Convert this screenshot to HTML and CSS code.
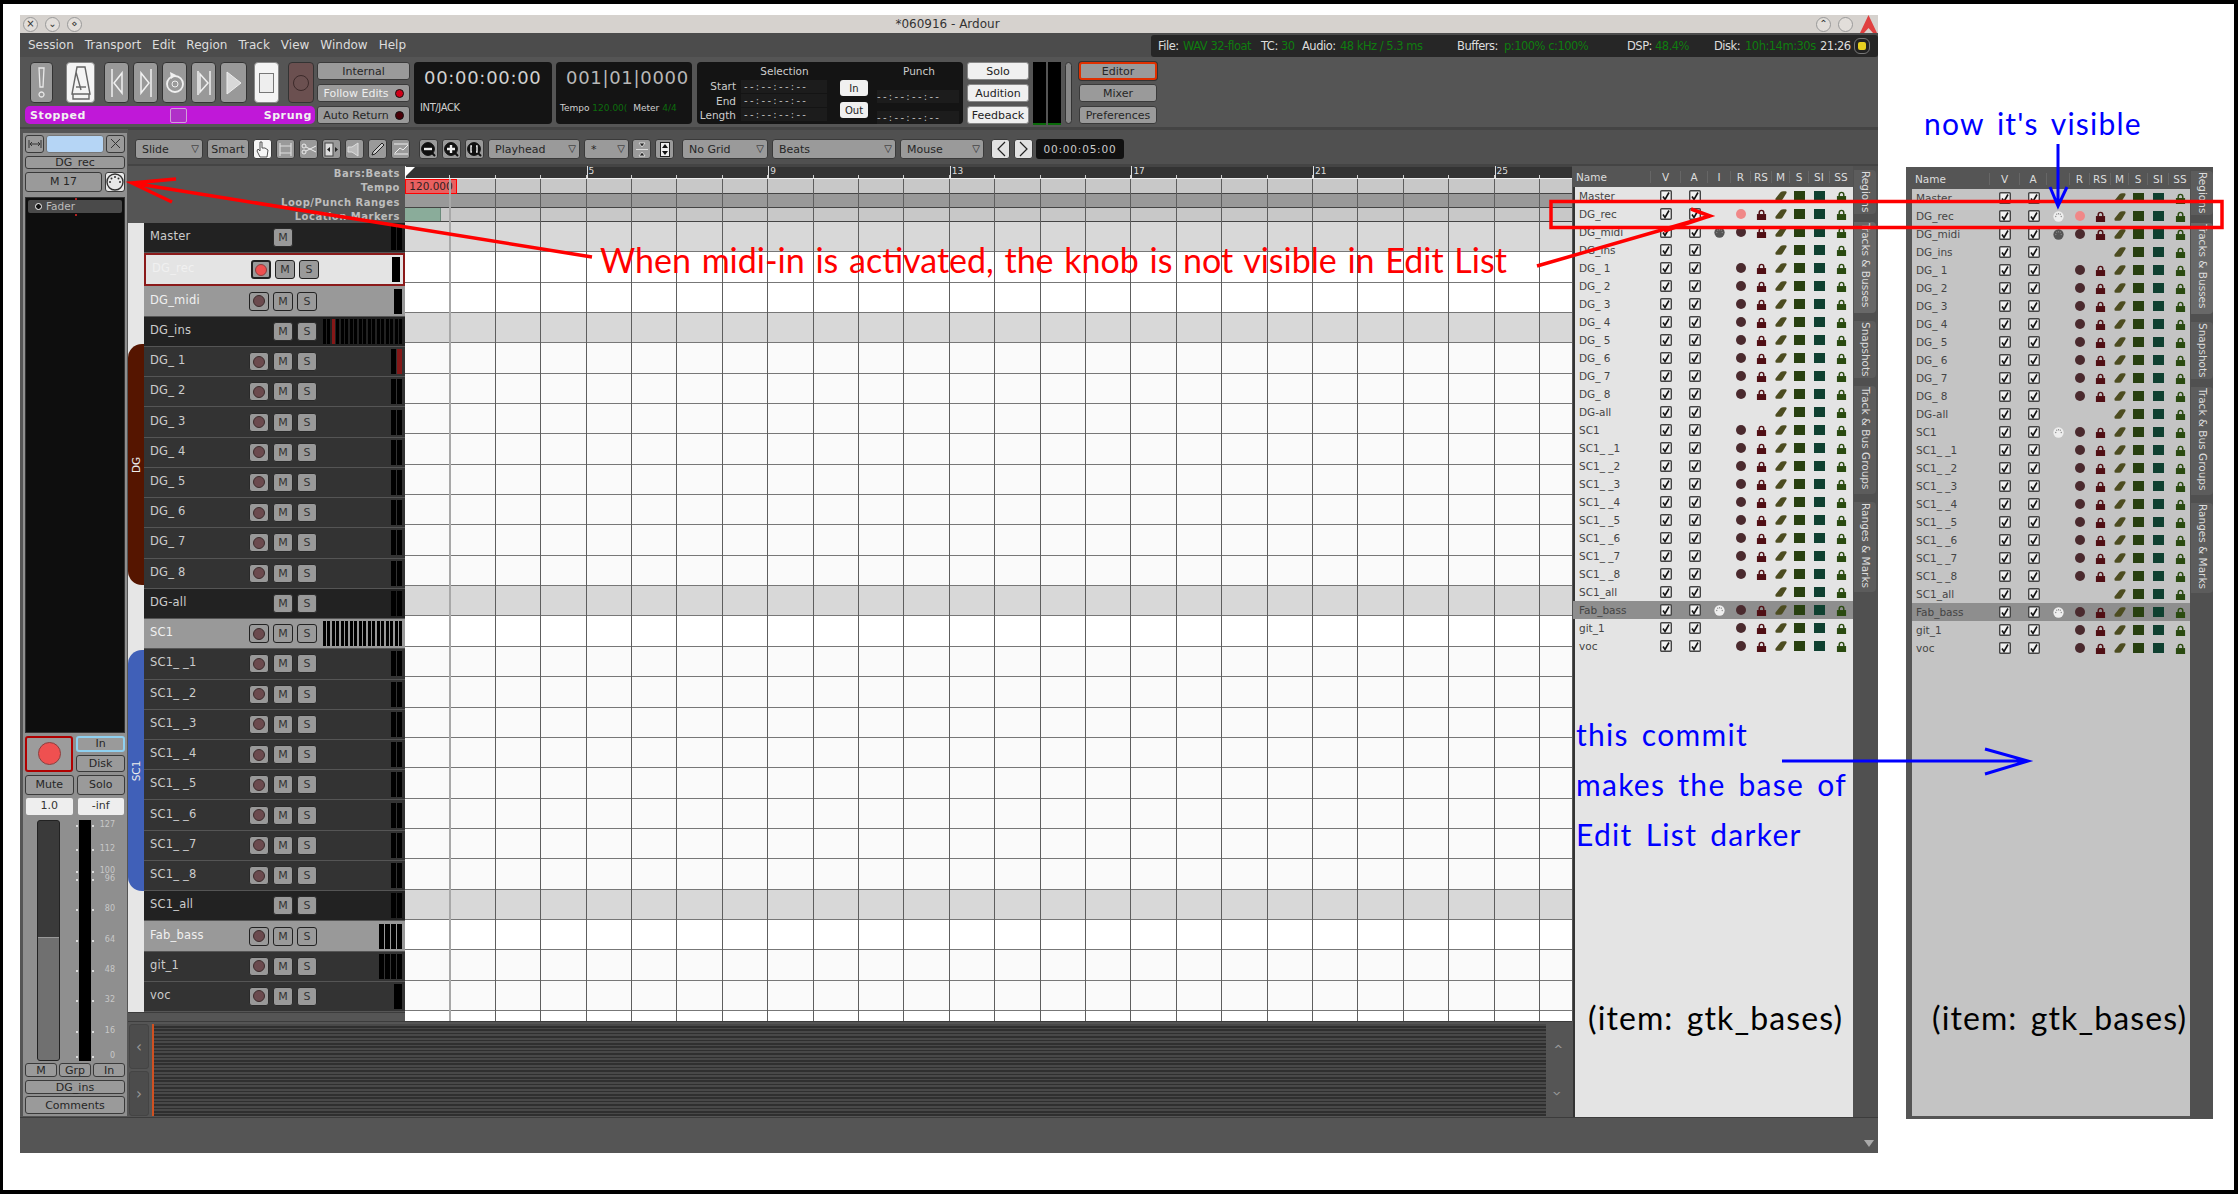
FILE: index.html
```html
<!DOCTYPE html>
<html lang="en">
<head>
    <meta charset="UTF-8">
    <title>*060916 - Ardour</title>
    <link rel="stylesheet" href="styles.css">
</head>
<body>
    <svg class="defs" width="0" height="0">
        <symbol id="check" viewBox="0 0 12 12">
            <rect x="0.7" y="0.7" width="10.6" height="10.6" rx="1" fill="#f2f2f2" stroke="#444" stroke-width="1.4"/>
            <path d="M3 6.5 L5 9.5 L9 2.5" fill="none" stroke="#111" stroke-width="1.6"/>
        </symbol>
        <symbol id="lock" viewBox="0 0 12 12">
            <path d="M3.5 6 V4 a2.5 2.5 0 0 1 5 0 V6" fill="none" stroke="currentColor" stroke-width="1.6"/>
            <rect x="1" y="5.5" width="10" height="6.5" fill="currentColor"/>
        </symbol>
        <symbol id="leaf" viewBox="0 0 12 10">
            <path d="M0.5 7.5 L5.5 1.2 Q6.5 0.2 8.5 0.2 H10.5 Q12 0.2 11.5 2 L7.5 8.5 Q6.8 9.8 5 9.8 H1.5 Q0 9.8 0.5 7.5 Z" fill="#4c4c20"/>
        </symbol>
        <symbol id="midi" viewBox="0 0 12 12">
            <circle cx="6" cy="6" r="5.6" fill="currentColor"/>
            <g fill="#888"><circle cx="3" cy="6" r=".7"/><circle cx="9" cy="6" r=".7"/><circle cx="4" cy="3.5" r=".7"/><circle cx="8" cy="3.5" r=".7"/><circle cx="6" cy="3" r=".7"/></g>
        </symbol>
    </svg>

    <div class="frame">
        <div class="window">
            <div class="titlebar">
                <div class="wm-left"><span class="wm">&#215;</span><span class="wm">&#8964;</span><span class="wm">&#8900;</span></div>
                <div class="title">*060916 - Ardour</div>
                <div class="wm-right">
                    <span class="wm">&#8963;</span><span class="wm"></span>
                    <svg class="a-logo" width="17" height="18" viewBox="0 0 17 18"><path d="M8.5 0 L17 18 H13 L8.5 13 L4 18 H0 Z" fill="#e04040"/></svg>
                </div>
            </div>

            <div class="menubar">
                <div class="menu">
                    <span>Session</span><span>Transport</span><span>Edit</span><span>Region</span><span>Track</span><span>View</span><span>Window</span><span>Help</span>
                </div>
                <div class="status">
                    <span class="w25">File:</span><span class="ok w78">WAV 32-float</span>
                    <span class="w20">TC:</span><span class="ok w21">30</span>
                    <span class="w38">Audio:</span><span class="ok w117">48 kHz / 5.3 ms</span>
                    <span class="w47">Buffers:</span><span class="ok w123">p:100% c:100%</span>
                    <span class="w28">DSP:</span><span class="ok w59">48.4%</span>
                    <span class="w31">Disk:</span><span class="ok w75">10h:14m:30s</span>
                    <span class="w35">21:26</span>
                    <span class="sync"></span>
                </div>
            </div>

            <div class="transport">
                <div class="tgroup">
                    <div class="tbuttons">
                        <button class="tb panic"><svg width="9" height="32" viewBox="0 0 9 32"><path d="M2 1 H7 L6 20 H3 Z M4.5 25 a2.5 2.5 0 1 0 .01 0" fill="none" stroke="#e8e8e8" stroke-width="1.3"/></svg></button>
                        <button class="tb metro on"><svg width="22" height="34" viewBox="0 0 22 34"><path d="M7 1 H15 L20 28 H2 Z M3 28 V33 H19 V28 M11 24 L6 6" fill="none" stroke="#666" stroke-width="1.4"/><path d="M6 21 H16" stroke="#666" stroke-width="1.4"/></svg></button>
                        <button class="tb seek"><svg width="14" height="30" viewBox="0 0 14 30"><path d="M2 1 V29 M12 5 V25 L4 15 Z" fill="none" stroke="#f0f0f0" stroke-width="1.5"/></svg></button>
                        <button class="tb seek"><svg width="14" height="30" viewBox="0 0 14 30"><path d="M12 1 V29 M2 5 V25 L10 15 Z" fill="none" stroke="#f0f0f0" stroke-width="1.5"/></svg></button>
                        <button class="tb seek"><svg width="20" height="24" viewBox="0 0 20 24"><circle cx="10" cy="13" r="8" fill="none" stroke="#f0f0f0" stroke-width="1.8"/><path d="M5 1 L11 4 L6 8 Z" fill="#f0f0f0"/><circle cx="10" cy="13" r="3" fill="none" stroke="#f0f0f0"/></svg></button>
                        <button class="tb seek"><svg width="16" height="30" viewBox="0 0 16 30"><path d="M2 3 V27 M14 3 V27 M4 6 V24 L12 15 Z" fill="none" stroke="#f0f0f0" stroke-width="1.5"/></svg></button>
                        <button class="tb play"><svg width="16" height="24" viewBox="0 0 16 24"><path d="M1 1 L15 12 L1 23 Z" fill="#d8d8d8" stroke="#eee"/></svg></button>
                        <button class="tb stop on"><span class="stop-box"></span></button>
                        <button class="tb rec"><span class="rec-ring"></span></button>
                    </div>
                    <div class="purple"><b>Stopped</b><span class="purple-box"></span><b>Sprung</b></div>
                </div>

                <div class="col col-mon">
                    <button class="btn wide">Internal</button>
                    <button class="btn wide lit">Follow Edits<i class="led red"></i></button>
                    <button class="btn wide">Auto Return<i class="led dim"></i></button>
                </div>

                <div class="clock clock-a">
                    <div class="digits">00:00:00:00</div>
                    <div class="sub">INT/JACK</div>
                </div>
                <div class="clock clock-b">
                    <div class="digits bbt">001|01|0000</div>
                    <div class="sub tempo">Tempo <em>120.00(</em> <span>Meter</span> <em>4/4</em></div>
                </div>

                <div class="selpanel">
                    <div class="selcol">
                        <div class="selhead">Selection</div>
                        <div class="selrow"><label>Start</label><span class="dash">--:--:--:--</span></div>
                        <div class="selrow"><label>End</label><span class="dash">--:--:--:--</span></div>
                        <div class="selrow"><label>Length</label><span class="dash">--:--:--:--</span></div>
                    </div>
                    <div class="inout">
                        <button class="lightbtn">In</button>
                        <button class="lightbtn">Out</button>
                    </div>
                    <div class="punch">
                        <div class="selhead">Punch</div>
                        <span class="dash">--:--:--:--</span>
                        <span class="dash">--:--:--:--</span>
                    </div>
                </div>

                <div class="col col-solo">
                    <button class="btn wide lightface">Solo</button>
                    <button class="btn wide lightface">Audition</button>
                    <button class="btn wide lightface">Feedback</button>
                </div>
                <div class="master-meter"><span></span><span></span></div>
                <div class="handle"></div>
                <div class="col col-tabs">
                    <button class="btn wide active">Editor</button>
                    <button class="btn wide">Mixer</button>
                    <button class="btn wide">Preferences</button>
                </div>
            </div>

            <div class="workspace">
                <div class="stripcol">
                    <div class="strip">
                        <div class="s-top">
                            <button class="btn sq"><svg width="14" height="8" viewBox="0 0 14 8"><path d="M1 0 V8 M13 0 V8 M2 4 H12 M4 2 L2 4 L4 6 M10 2 L12 4 L10 6" fill="none" stroke="#333"/></svg></button>
                            <div class="s-name"></div>
                            <button class="btn sq"><svg width="11" height="11" viewBox="0 0 11 11"><path d="M1 1 L10 10 M10 1 L1 10" stroke="#333"/></svg></button>
                        </div>
                        <button class="btn s-label">DG_rec</button>
                        <div class="s-midi">
                            <button class="btn s-m17">M 17</button>
                            <button class="btn s-din">
                                <svg width="18" height="18" viewBox="0 0 18 18"><circle cx="9" cy="9" r="8" fill="none" stroke="#333" stroke-width="1.4"/><g fill="#333"><circle cx="4" cy="9" r="1"/><circle cx="14" cy="9" r="1"/><circle cx="5.5" cy="5.5" r="1"/><circle cx="12.5" cy="5.5" r="1"/><circle cx="9" cy="4" r="1"/></g></svg>
                            </button>
                        </div>
                        <div class="processors">
                            <div class="fader-proc"><i></i>Fader</div>
                        </div>
                        <div class="s-rec">
                            <button class="btn s-recbtn"><span></span></button>
                            <div class="s-inputs">
                                <button class="btn s-in">In</button>
                                <button class="btn s-disk">Disk</button>
                            </div>
                        </div>
                        <div class="s-ms">
                            <button class="btn">Mute</button>
                            <button class="btn">Solo</button>
                        </div>
                        <div class="s-gain">
                            <span>1.0</span>
                            <span>-inf</span>
                        </div>
                        <div class="s-fader">
                            <div class="fader"><div class="fader-fill"></div></div>
                            <div class="smeter" id="meter-scale"></div>
                        </div>
                        <div class="s-bottom">
                            <button class="btn">M</button>
                            <button class="btn">Grp</button>
                            <button class="btn">In</button>
                        </div>
                        <button class="btn s-bus">DG_ins</button>
                        <button class="btn s-comments">Comments</button>
                    </div>
                </div>

                <div class="rightside">
                    <div class="toolbar">
                        <button class="btn dd w68">Slide</button>
                        <button class="btn w42">Smart</button>
                        <button class="btn tool on"><svg width="13" height="17" viewBox="0 0 13 17"><path d="M4 1 V10 L2 8 L1 10 L4 16 H11 L12 9 L9 7 L6 7 V1 Z" fill="none" stroke="#555"/></svg></button>
                        <button class="btn tool"><svg width="15" height="15" viewBox="0 0 15 15"><path d="M2 1 V14 M13 1 V14 M2 4 H13 M2 11 H13" fill="none" stroke="#ddd" stroke-width="1.2"/></svg></button>
                        <button class="btn tool"><svg width="16" height="12" viewBox="0 0 16 12"><circle cx="3" cy="3" r="2" fill="none" stroke="#eee"/><circle cx="3" cy="9" r="2" fill="none" stroke="#eee"/><path d="M5 4 L15 9 M5 8 L15 3" stroke="#eee"/></svg></button>
                        <button class="btn tool"><svg width="15" height="15" viewBox="0 0 15 15"><rect x="1" y="1" width="8" height="13" fill="#ddd" stroke="#444"/><path d="M3 7.5 L6 5 V10 Z M11 5 L14 7.5 L11 10 Z" fill="#222"/></svg></button>
                        <button class="btn tool"><svg width="15" height="15" viewBox="0 0 15 15"><path d="M1 5 H5 L11 1 V14 L5 10 H1 Z" fill="#bbb" stroke="#ddd"/></svg></button>
                        <button class="btn tool"><svg width="14" height="14" viewBox="0 0 14 14"><path d="M1 13 L2 10 L11 1 L13 3 L4 12 Z" fill="#ccc" stroke="#222"/></svg></button>
                        <button class="btn tool"><svg width="16" height="14" viewBox="0 0 16 14"><path d="M1 2 H15 M1 12 H15 M2 11 L7 6 L10 8 L15 3" fill="none" stroke="#eee"/></svg></button>
                        <button class="btn zoom gap9"><svg width="15" height="15" viewBox="0 0 15 15"><circle cx="7" cy="7" r="6.4" fill="#111" stroke="#111"/><path d="M3 7 H11" stroke="#eee" stroke-width="2.4"/><path d="M11 11 L14 14" stroke="#111" stroke-width="2"/></svg></button>
                        <button class="btn zoom"><svg width="15" height="15" viewBox="0 0 15 15"><circle cx="7" cy="7" r="6.4" fill="#111" stroke="#111"/><path d="M3 7 H11 M7 3 V11" stroke="#eee" stroke-width="2.4"/><path d="M11 11 L14 14" stroke="#111" stroke-width="2"/></svg></button>
                        <button class="btn zoom"><svg width="15" height="15" viewBox="0 0 15 15"><circle cx="7" cy="7" r="6.4" fill="#111" stroke="#111"/><path d="M5 4 H4 V10 H5 M9 4 H10 V10 H9" fill="none" stroke="#eee" stroke-width="1.4"/><path d="M11 11 L14 14" stroke="#111" stroke-width="2"/></svg></button>
                        <button class="btn dd w92">Playhead</button>
                        <button class="btn dd w45">*</button>
                        <button class="btn tool tight"><svg width="14" height="15" viewBox="0 0 14 15"><path d="M1 7.5 H13 M4 1 H10 L7 5 Z M4 14 H10 L7 10 Z" fill="#222" stroke="#eee" stroke-width=".8"/></svg></button>
                        <button class="btn tool lightt"><svg width="10" height="15" viewBox="0 0 10 15"><rect x=".5" y=".5" width="9" height="14" fill="#eee" stroke="#222"/><path d="M2 6 L5 2 L8 6 Z M2 9 L5 13 L8 9 Z" fill="#111"/></svg></button>
                        <button class="btn dd w86 gap8">No Grid</button>
                        <button class="btn dd w124">Beats</button>
                        <button class="btn dd w84">Mouse</button>
                        <button class="btn nudge gap7"><svg width="10" height="16" viewBox="0 0 10 16"><path d="M9 1 L2 8 L9 15" fill="none" stroke="#222" stroke-width="1.2"/></svg></button>
                        <button class="btn nudge"><svg width="10" height="16" viewBox="0 0 10 16"><path d="M1 1 L8 8 L1 15" fill="none" stroke="#222" stroke-width="1.2"/></svg></button>
                        <div class="nudge-clock">00:00:05:00</div>
                    </div>

                    <div class="editarea">
                        <div class="editor">
                            <div class="timeline">
                                <div class="leftcol">
                                    <div class="rulerlabels">
                                        <div>Bars:Beats</div>
                                        <div>Tempo</div>
                                        <div>Loop/Punch Ranges</div>
                                        <div>Location Markers</div>
                                    </div>
                                    <div class="tracks" id="tracks"></div>
                                    <div class="trackfoot"></div>
                                </div>
                                <div class="canvas">
                                    <div class="bars">
                                        <div class="bar"></div><div class="bar">5</div><div class="bar">9</div><div class="bar">13</div><div class="bar">17</div><div class="bar">21</div><div class="bar">25</div>
                                    </div>
                                    <div class="band tempo-band"><span class="tempo-mark">120.000</span></div>
                                    <div class="band range-band"></div>
                                    <div class="band marker-band"><span class="marker-mark"></span></div>
                                    <div class="lanes" id="lanes"></div>
                                    <div class="lanefoot"></div>
                                    <div class="gridlines"></div>
                                </div>
                            </div>
                            <div class="summary">
                                <div class="sumbtns"><button>&#8249;</button><button>&#8250;</button></div>
                                <div class="sumview"></div>
                                <div class="sumbtns"><button class="up">&#8250;</button><button class="down">&#8250;</button></div>
                            </div>
                        </div>
                        <div class="editlist-wrap" data-list="before"></div>
                    </div>
                </div>
            </div>

            <div class="statusbar"><span class="grip"></span></div>
        </div>

        <div class="crop editlist-wrap" data-list="after"></div>

        <!-- annotations drawn over the screenshot -->
        <svg class="marks" width="2238" height="1194" viewBox="0 0 2238 1194">
            <g fill="none" stroke="#f00" stroke-width="3.5">
                <rect x="1551" y="201.5" width="671" height="26" stroke-width="3.5"/>
                <path d="M592 257 L132 183 M176 179 L132 183 L172 202"/>
                <path d="M1537 266 L1710 216 M1691 209 L1710 216 L1664 231"/>
            </g>
            <g fill="none" stroke="#00f" stroke-width="3">
                <path d="M2058 144 V206 M2050 187 L2058 206 L2067 187"/>
                <path d="M1782 761 H2028 M1985 749 L2028 761 L1985 774"/>
            </g>
        </svg>
        <div class="note note-red">When midi-in is activated, the knob is not visible in Edit List</div>
        <div class="note note-now">now it's visible</div>
        <div class="note note-commit">this commit<br>makes the base of<br>Edit List darker</div>
        <div class="note note-item one">(item: gtk_bases)</div>
        <div class="note note-item two">(item: gtk_bases)</div>
    </div>

    <script>
        // kind: row colour, bars: meter bars, input / afterInput: midi dot in the two lists
        const tracks = [
            { name: 'Master', kind: 'bus', rec: false, solo: false, bars: 2 },
            { name: 'DG_rec', kind: 'selected', bars: 1, single: true, afterInput: 'in-white', armed: true },
            { name: 'DG_midi', kind: 'grey', bars: 1, single: true, input: 'in-dark', afterInput: 'in-dark' },
            { name: 'DG_ins', kind: 'bus', rec: false, bars: 18, hot: 2 },
            { name: 'DG_ 1', bars: 2, hot: 1 },
            { name: 'DG_ 2', bars: 2 },
            { name: 'DG_ 3', bars: 2 },
            { name: 'DG_ 4', bars: 2 },
            { name: 'DG_ 5', bars: 2 },
            { name: 'DG_ 6', bars: 2 },
            { name: 'DG_ 7', bars: 2 },
            { name: 'DG_ 8', bars: 2 },
            { name: 'DG-all', kind: 'bus', rec: false, bars: 2 },
            { name: 'SC1', kind: 'grey', bars: 18, afterInput: 'in-white' },
            { name: 'SC1_ _1', bars: 2 },
            { name: 'SC1_ _2', bars: 2 },
            { name: 'SC1_ _3', bars: 2 },
            { name: 'SC1_ _4', bars: 2 },
            { name: 'SC1_ _5', bars: 2 },
            { name: 'SC1_ _6', bars: 2 },
            { name: 'SC1_ _7', bars: 2 },
            { name: 'SC1_ _8', bars: 2 },
            { name: 'SC1_all', kind: 'bus', rec: false, bars: 2 },
            { name: 'Fab_bass', kind: 'grey', bars: 4, input: 'in-white', afterInput: 'in-white', hl: true },
            { name: 'git_1', bars: 4 },
            { name: 'voc', bars: 1, single: true }
        ];

        const trackList = document.getElementById('tracks');
        const lanes = document.getElementById('lanes');

        function addGroupTab(label, cls) {
            const tab = document.createElement('div');
            tab.className = 'grouptab ' + cls;
            tab.innerHTML = `<span>${label}</span>`;
            trackList.appendChild(tab);
        }

        tracks.forEach(t => {
            const row = document.createElement('div');
            row.className = 'track ' + (t.kind || '');
            const hasRec = t.rec !== false;
            let meter = '';
            for (let i = 0; i < t.bars; i++) {
                meter += `<i class="${t.hot === i ? 'hot' : ''}"></i>`;
            }
            row.innerHTML = `
                <div class="tname">${t.name}</div>
                ${hasRec ? `<button class="tbtn trec ${t.armed ? 'armed' : ''}"><span></span></button>` : '<span class="tspace"></span>'}
                <button class="tbtn">M</button>
                ${t.solo !== false ? '<button class="tbtn">S</button>' : ''}
                <div class="tmeter ${t.bars > 4 ? 'many' : ''} ${t.single ? 'onebar' : ''}">${meter}</div>
            `;
            trackList.appendChild(row);

            const lane = document.createElement('div');
            lane.className = 'lane ' + (t.kind || '');
            lanes.appendChild(lane);
        });

        addGroupTab('DG', 'dg');
        addGroupTab('SC1', 'sc');

        const columns = ['Name', 'V', 'A', 'I', 'R', 'RS', 'M', 'S', 'SI', 'SS'];
        const use = (id, cls) => `<svg class="${cls}"><use href="#${id}"/></svg>`;

        function buildList(wrap, after) {
            let html = '<div class="listcol"><div class="listhead">';
            columns.forEach(c => { html += `<div>${c}</div>`; });
            html += '</div><div class="listbody">';
            tracks.forEach(t => {
                const input = after ? t.afterInput : t.input;
                const hasRec = t.rec !== false;
                html += `<div class="lrow ${t.hl ? 'hl' : ''}">
                    <div class="lname">${t.name}</div>
                    <div>${use('check', 'ck')}</div>
                    <div>${use('check', 'ck')}</div>
                    <div>${input ? use('midi', 'ic-in ' + input) : ''}</div>
                    <div>${hasRec ? `<span class="rdot ${t.armed ? 'armed' : ''}"></span>` : ''}</div>
                    <div>${hasRec ? use('lock', 'ic rs') : ''}</div>
                    <div>${use('leaf', 'ic-leaf')}</div>
                    <div><span class="sq-s"></span></div>
                    <div><span class="sq-si"></span></div>
                    <div>${use('lock', 'ic ss')}</div>
                </div>`;
            });
            html += '</div></div><div class="vtabs">';
            ['Regions', 'Tracks &amp; Busses', 'Snapshots', 'Track &amp; Bus Groups', 'Ranges &amp; Marks'].forEach((v, i) => {
                html += `<div class="vtab v${i}">${v}</div>`;
            });
            html += '</div>';
            wrap.innerHTML = html;
        }

        document.querySelectorAll('.editlist-wrap').forEach(w => buildList(w, w.dataset.list === 'after'));

        // mixer strip meter scale
        const scale = document.getElementById('meter-scale');
        [['127', 826], ['112', 850], ['100', 872], ['96', 880], ['80', 910], ['64', 941], ['48', 971], ['32', 1001], ['16', 1032], ['0', 1057]].forEach(s => {
            const top = s[1] - 821;
            const label = document.createElement('span');
            label.className = 'scale';
            label.style.top = (top - 5) + 'px';
            label.textContent = s[0];
            scale.appendChild(label);
            const tick = document.createElement('span');
            tick.className = 'tick';
            tick.style.top = top + 'px';
            scale.appendChild(tick);
        });
    </script>
</body>
</html>
```
FILE: styles.css
```css
* {
    box-sizing: border-box;
}
html, body {
    margin: 0;
    padding: 0;
    background: #fff;
}
.defs {
    position: absolute;
}
button {
    font: inherit;
    padding: 0;
    margin: 0;
}
.frame {
    position: relative;
    width: 2238px;
    height: 1194px;
    overflow: hidden;
    border: solid #000;
    border-width: 4px 4px 4px 3px;
    padding: 11px 0 0 17px;
    display: flex;
    align-items: flex-start;
    background: #fff;
    font-family: "DejaVu Sans", sans-serif;
}
.window {
    width: 1858px;
    height: 1138px;
    flex: none;
    display: flex;
    flex-direction: column;
    background: #555;
}

/* title bar */
.titlebar {
    height: 18px;
    background: #d6d2ce;
    display: flex;
    align-items: center;
    position: relative;
    flex: none;
}
.title {
    flex: 1;
    text-align: center;
    font-size: 12px;
    color: #333;
    padding-right: 3px;
}
.wm-left, .wm-right {
    display: flex;
    gap: 7px;
    align-items: center;
}
.wm-left {
    padding-left: 3px;
    width: 300px;
}
.wm-right {
    width: 300px;
    justify-content: flex-end;
    padding-right: 1px;
    gap: 7px;
}
.wm {
    width: 15px;
    height: 15px;
    border-radius: 50%;
    background: #e2deda;
    border: 1px solid #999;
    font-size: 10px;
    line-height: 12px;
    text-align: center;
    color: #333;
}

/* menu + session info */
.menubar {
    height: 24px;
    flex: none;
    display: flex;
    align-items: stretch;
    background: #4c4c4c;
}
.menu {
    display: flex;
    width: 1131px;
    padding-left: 8px;
    gap: 11px;
    align-items: center;
    font-size: 12px;
    color: #ddd;
}
.status {
    width: 727px;
    margin-top: 2px;
    background: #262626;
    border-radius: 3px;
    display: flex;
    align-items: center;
    padding-left: 7px;
    font-size: 11.5px;
    letter-spacing: -.5px;
    color: #ddd;
    white-space: nowrap;
}
.ok {
    color: #0f7d0f;
}
.w20 { width: 20px; }
.w21 { width: 21px; }
.w25 { width: 25px; }
.w28 { width: 28px; }
.w31 { width: 31px; }
.w35 { width: 35px; }
.w38 { width: 38px; }
.w47 { width: 47px; }
.w59 { width: 59px; }
.w75 { width: 75px; }
.w78 { width: 78px; }
.w117 { width: 117px; }
.w123 { width: 123px; }
.sync {
    width: 14px;
    height: 14px;
    background: #e8d020;
    border: 3px solid #222;
    outline: 1px solid #777;
    border-radius: 5px;
}

/* transport */
.transport {
    height: 72px;
    flex: none;
    display: flex;
    padding: 5px 0 0 5px;
    border-bottom: 2px solid #444;
}
.tgroup {
    width: 290px;
    flex: none;
}
.tbuttons {
    display: flex;
    gap: 4px;
    height: 41px;
}
.tb {
    width: 25px;
    height: 41px;
    background: #999;
    border: 1px solid #333;
    border-radius: 4px;
    display: flex;
    align-items: center;
    justify-content: center;
}
.tb.on {
    background: #f4f4f4;
    border-color: #888;
}
.panic {
    width: 23px;
    margin-left: 5px;
}
.metro {
    width: 29px;
    margin-left: 9px;
    margin-right: 5px;
}
.play {
    width: 27px;
}
.stop {
    margin-left: 3px;
}
.stop-box {
    width: 15px;
    height: 20px;
    border: 1px solid #777;
    background: #eee;
}
.rec {
    width: 26px;
    margin-left: 5px;
    background: #6b5050;
}
.rec-ring {
    width: 16px;
    height: 16px;
    border-radius: 50%;
    border: 1px solid #3c2a2a;
    background: #6b5050;
}
.purple {
    height: 18px;
    margin-top: 3px;
    background: #c018d8;
    border-radius: 5px;
    display: flex;
    align-items: center;
    justify-content: space-between;
    padding: 0 3px 0 5px;
    font-size: 11px;
    letter-spacing: .6px;
    color: #f2f2f2;
}
.purple-box {
    width: 17px;
    height: 15px;
    border: 1px solid #d0a0d8;
    background: #b030c8;
    border-radius: 2px;
    margin-left: 8px;
}
.col {
    display: flex;
    flex-direction: column;
    gap: 4px;
    flex: none;
}
.btn {
    background: #9a9a9a;
    border: 1px solid #3a3a3a;
    border-radius: 3px;
    color: #262626;
    font-size: 11px;
    display: flex;
    align-items: center;
    justify-content: center;
    white-space: nowrap;
}
.wide {
    height: 18px;
    width: 100%;
}
.col-mon {
    width: 93px;
    margin-left: 2px;
}
.lit {
    color: #eee;
}
.led {
    width: 9px;
    height: 9px;
    border-radius: 50%;
    margin-left: 6px;
    border: 1px solid #111;
}
.led.red {
    background: #d00018;
}
.led.dim {
    background: #4a0008;
}
.clock {
    background: #141414;
    border-radius: 4px;
    height: 62px;
    color: #d0d0d0;
    flex: none;
    margin-left: 4px;
}
.clock-a {
    width: 138px;
    padding: 5px 0 0 6px;
}
.clock-b {
    width: 136px;
    padding: 5px 0 0 4px;
}
.digits {
    font-size: 18px;
    line-height: 22px;
    letter-spacing: .7px;
    white-space: nowrap;
    padding-left: 4px;
}
.bbt {
    padding-left: 6px;
    color: #b8b8b8;
}
.sub {
    font-size: 10px;
    margin-top: 13px;
    letter-spacing: -.4px;
}
.tempo {
    font-size: 9px;
    margin-top: 14px;
    white-space: nowrap;
    letter-spacing: 0;
}
.tempo em {
    font-style: normal;
    color: #0d6d0d;
    margin-right: 3px;
}
.selpanel {
    width: 266px;
    height: 62px;
    margin-left: 5px;
    background: #141414;
    border-radius: 4px;
    display: flex;
    flex: none;
    color: #ccc;
    font-size: 11px;
}
.selcol {
    width: 131px;
}
.selhead {
    text-align: center;
    height: 17px;
    line-height: 18px;
    padding-left: 44px;
    font-size: 10.5px;
}
.selrow {
    display: flex;
    height: 14.4px;
    align-items: center;
}
.selrow label {
    width: 40px;
    text-align: right;
    padding-right: 1px;
    font-size: 10.5px;
}
.dash {
    letter-spacing: 2.3px;
    font-size: 10px;
    line-height: 13px;
    color: #bbb;
    margin-left: 4px;
    background: #1c1c1c;
    white-space: nowrap;
    padding: 0 0 0 3px;
    width: 86px;
}
.inout {
    width: 49px;
    padding: 18px 0 0 12px;
    display: flex;
    flex-direction: column;
    gap: 6px;
}
.lightbtn {
    width: 28px;
    height: 16px;
    background: #f0f0f0;
    border: 0;
    border-radius: 3px;
    font-size: 10px;
    color: #222;
}
.punch {
    width: 84px;
    display: flex;
    flex-direction: column;
    gap: 8px;
}
.punch .selhead {
    padding-left: 0;
    height: 20px;
}
.punch .dash {
    margin: 0;
    width: 82px;
    padding-left: 0;
}
.col-solo {
    width: 62px;
    margin-left: 4px;
}
.lightface {
    background: #f0f0f0;
    color: #222;
    border-color: #888;
}
.master-meter {
    width: 28px;
    height: 63px;
    margin-left: 4px;
    display: flex;
    gap: 2px;
    flex: none;
}
.master-meter span {
    flex: 1;
    background: linear-gradient(#000 97%, #0a6a0a 97%);
}
.handle {
    width: 7px;
    height: 62px;
    margin-left: 4px;
    background: #888;
    border: 1px solid #333;
    border-radius: 4px;
    flex: none;
}
.col-tabs {
    width: 78px;
    margin-left: 7px;
}
.active {
    border: 2px solid #e03000;
    box-shadow: 0 0 0 1px #333;
}

/* main area */
.workspace {
    flex: 1;
    display: flex;
    min-height: 0;
}
.stripcol {
    width: 108px;
    flex: none;
    padding: 4px 0 0 3px;
}
.strip {
    width: 104px;
    height: 983px;
    background: #8f8f8f;
    padding: 2px;
    display: flex;
    flex-direction: column;
}
.s-top {
    display: flex;
    gap: 2px;
    height: 18px;
}
.sq {
    width: 19px;
    flex: none;
}
.s-name {
    flex: 1;
    background: #b5d5f5;
    border-radius: 3px;
    border: 1px solid #777;
}
.s-label {
    height: 13px;
    margin-top: 3px;
}
.s-midi {
    display: flex;
    gap: 3px;
    margin-top: 3px;
    height: 20px;
}
.s-m17 {
    flex: 1;
}
.s-din {
    width: 20px;
    flex: none;
    background: #e8e8e8;
}
.processors {
    height: 536px;
    margin-top: 5px;
    background: #0e0e0e;
    border: 1px solid #333;
    padding: 2px;
    flex: none;
}
.fader-proc {
    height: 13px;
    background: #4a4a4a;
    border-radius: 2px;
    color: #bbb;
    font-size: 10.5px;
    display: flex;
    align-items: center;
    padding-left: 7px;
    gap: 4px;
    position: relative;
}
.fader-proc::before, .fader-proc::after {
    content: "";
    position: absolute;
    left: 47px;
    width: 2px;
    height: 2px;
    background: #b02020;
}
.fader-proc::before {
    top: -2px;
}
.fader-proc::after {
    bottom: -3px;
}
.fader-proc i {
    width: 7px;
    height: 7px;
    border-radius: 50%;
    background: #111;
    border: 1.5px solid #fff;
}
.s-rec {
    display: flex;
    gap: 3px;
    margin-top: 3px;
    height: 36px;
}
.s-recbtn {
    width: 48px;
    border: 2px solid #b00000;
    background: #9c9c9c;
}
.s-recbtn span {
    width: 23px;
    height: 23px;
    border-radius: 50%;
    background: #ef5050;
    border: 1px solid #8a4040;
}
.s-inputs {
    flex: 1;
    display: flex;
    flex-direction: column;
    gap: 3px;
}
.s-in {
    height: 16px;
    border: 2px solid #8fd0f0;
}
.s-disk {
    flex: 1;
}
.s-ms {
    display: flex;
    gap: 3px;
    height: 20px;
    margin-top: 3px;
}
.s-ms .btn {
    flex: 1;
}
.s-gain {
    display: flex;
    gap: 5px;
    height: 18px;
    margin-top: 3px;
    padding: 0 1px;
}
.s-gain span {
    flex: 1;
    background: #eee;
    border-radius: 2px;
    font-size: 11px;
    color: #333;
    text-align: center;
    line-height: 16px;
}
.s-fader {
    display: flex;
    height: 242px;
    margin-top: 5px;
    padding-left: 12px;
}
.fader {
    width: 23px;
    background: #3a3a3a;
    border: 1px solid #222;
    border-radius: 3px;
    position: relative;
    overflow: hidden;
    display: flex;
    align-items: flex-end;
}
.fader-fill {
    width: 100%;
    height: 123px;
    background: #707070;
    border-top: 1px solid #999;
}
.smeter {
    position: relative;
    width: 12px;
    margin-left: 19px;
    background: #000;
}
.scale {
    position: absolute;
    right: -24px;
    color: #c8c8c8;
    font-size: 8px;
    line-height: 10px;
}
.tick {
    position: absolute;
    left: -3px;
    right: -3px;
    height: 2px;
    border-left: 2px solid #ddd;
    border-right: 2px solid #ddd;
}
.s-bottom {
    display: flex;
    gap: 2px;
    height: 14px;
    margin-top: 2px;
}
.s-bottom .btn {
    flex: 1;
}
.s-bus {
    height: 14px;
    margin-top: 3px;
}
.s-comments {
    height: 18px;
    margin-top: 2px;
}

.rightside {
    flex: 1;
    min-width: 0;
    display: flex;
    flex-direction: column;
}
.toolbar {
    height: 37px;
    flex: none;
    display: flex;
    align-items: center;
    gap: 4px;
    padding: 4px 0 0 7px;
    background: #505050;
    border-top: 1px solid #444;
    border-bottom: 2px solid #444;
}
.toolbar .btn {
    height: 20px;
    flex: none;
}
.w42 { width: 42px; }
.w45 { width: 45px; }
.w68 { width: 68px; }
.w84 { width: 84px; }
.w86 { width: 86px; }
.w92 { width: 92px; }
.w124 { width: 124px; }
.dd {
    position: relative;
    justify-content: flex-start;
    padding-left: 6px;
}
.dd::after {
    content: "\25BD";
    position: absolute;
    right: 3px;
    top: 2px;
    font-size: 10px;
    line-height: 14px;
    color: #222;
}
.toolbar .tool {
    width: 19px;
}
.toolbar .tool.on {
    background: #f6f6f6;
}
.toolbar .tight {
    margin-left: -1px;
}
.toolbar .zoom {
    width: 19px;
}
.gap7 { margin-left: 3px; }
.gap8 { margin-left: 4px; }
.gap9 { margin-left: 5px; }
.toolbar .nudge {
    width: 19px;
    background: #e2e2e2;
}
.nudge-clock {
    width: 88px;
    height: 20px;
    margin-left: -1px;
    background: #111;
    border-radius: 3px;
    color: #ccc;
    font-size: 10.5px;
    letter-spacing: .8px;
    text-align: center;
    line-height: 20px;
}

.editarea {
    flex: 1;
    min-height: 0;
    display: flex;
}
.editor {
    width: 1444px;
    flex: none;
    display: flex;
    flex-direction: column;
}
.timeline {
    display: flex;
    height: 855px;
    flex: none;
}
.leftcol {
    width: 277px;
    flex: none;
    display: flex;
    flex-direction: column;
}
.rulerlabels {
    height: 57px;
    padding: 1px 5px 0 0;
    flex: none;
    text-align: right;
    font-size: 10px;
    font-weight: bold;
    line-height: 14.3px;
    letter-spacing: .5px;
    color: #bdbdbd;
}
.tracks {
    height: 789px;
    flex: none;
    position: relative;
    display: flex;
    flex-direction: column;
    background: #e6e6e6;
    padding-left: 16px;
}
.trackfoot {
    flex: 1;
    background: #555;
    border-top: 1px solid #3c3c3c;
}
.grouptab {
    position: absolute;
    left: 0;
    width: 16px;
    border-radius: 14px 0 0 14px;
    color: #eee;
    font-size: 10.5px;
    display: flex;
    align-items: center;
    justify-content: center;
}
.grouptab span {
    transform: rotate(-90deg);
}
.grouptab.dg {
    top: 121px;
    height: 241px;
    background: #551500;
}
.grouptab.sc {
    top: 427px;
    height: 241px;
    background: #4060b8;
}
.track {
    flex: 1;
    min-height: 0;
    background: #333;
    display: flex;
    align-items: center;
    padding: 0 3px 0 6px;
    gap: 4px;
    border-bottom: 1px solid #555;
    color: #ccc;
    font-size: 11.5px;
}
.track.bus {
    background: #222;
}
.track.grey {
    background: #999;
    color: #f0f0f0;
}
.track.selected {
    background: #e4e4e4;
    color: #f0f0f0;
    border: 2px solid #8b1a1a;
}
.tname {
    width: 95px;
    flex: none;
    margin-top: -3px;
    letter-spacing: .2px;
}
.tbtn {
    width: 20px;
    height: 19px;
    background: #999;
    border: 1px solid #2a2a2a;
    border-radius: 3px;
    color: #333;
    font-size: 11px;
    display: flex;
    align-items: center;
    justify-content: center;
    flex: none;
}
.track.grey .tbtn, .track.selected .tbtn {
    border-color: #222;
    background: #9a9a9a;
}
.tspace {
    width: 20px;
    flex: none;
}
.trec span {
    width: 12px;
    height: 12px;
    border-radius: 50%;
    background: #6b4a4e;
    border: 1px solid #3c2c2c;
}
.trec.armed {
    border: 2px solid #8a0000;
}
.trec.armed span {
    background: #ef5050;
    border-color: #8a4040;
}
.tmeter {
    margin-left: auto;
    height: 25px;
    display: flex;
    gap: 1px;
}
.tmeter i {
    width: 5px;
    background: #000;
}
.tmeter i.hot {
    background: #851818;
}
.tmeter.onebar i {
    width: 8px;
}
.tmeter.many {
    gap: 1.5px;
}
.tmeter.many i {
    width: 3px;
}
.canvas {
    flex: 1;
    min-width: 0;
    position: relative;
    display: flex;
    flex-direction: column;
    background: #fff;
}
.bars {
    height: 13px;
    flex: none;
    display: flex;
    background:
        repeating-linear-gradient(90deg, transparent 0, transparent 44.4px, #ccc 44.4px, #ccc 45.4px) left bottom / 100% 3px no-repeat,
        linear-gradient(#555 0, #333 1px);
    border-bottom: 1px solid #eee;
    position: relative;
}
.bars::before {
    content: "";
    position: absolute;
    left: 0;
    top: 1px;
    border-left: 10px solid #fff;
    border-bottom: 10px solid transparent;
}
.bar {
    width: 181.6px;
    flex: none;
    border-left: 1px solid #ddd;
    font-size: 9px;
    color: #ddd;
    padding-left: 1px;
    line-height: 10px;
}
.band {
    flex: none;
    border-bottom: 1px solid #444;
}
.tempo-band {
    height: 15px;
    background: #c8c8c8;
}
.tempo-mark {
    display: block;
    width: 52px;
    height: 15px;
    background: #e86060;
    border: 1px solid #f00;
    font-size: 10.5px;
    color: #322;
    line-height: 13px;
    text-align: center;
}
.range-band {
    height: 14px;
    background: #999;
}
.marker-band {
    height: 14px;
    background: #c8c8c8;
}
.marker-mark {
    display: block;
    width: 36px;
    height: 13px;
    background: #8aac9a;
    border-right: 1px solid #6a8a7a;
}
.lanes {
    height: 789px;
    flex: none;
    display: flex;
    flex-direction: column;
}
.lane {
    flex: 1;
    min-height: 0;
    background: #fafafa;
    border-bottom: 1px solid #777;
}
.lane.bus {
    background: #d8d8d8;
}
.lane.selected, .lane.grey {
    background: #fff;
}
.lanefoot {
    flex: 1;
}
.gridlines {
    position: absolute;
    left: 0;
    right: 0;
    top: 13px;
    bottom: 0;
    background:
        linear-gradient(90deg, transparent 44px, #a8a8a8 44px, #a8a8a8 46px, transparent 46px),
        repeating-linear-gradient(90deg, transparent 0, transparent 44.4px, #5e5e5e 44.4px, #5e5e5e 45.4px);
}
.summary {
    flex: 1;
    display: flex;
    padding: 2px 2px 1px 1px;
    border-top: 1px solid #3c3c3c;
}
.sumbtns {
    width: 20px;
    flex: none;
    display: flex;
    flex-direction: column;
    gap: 2px;
}
.sumbtns button {
    flex: 1;
    background: #4c4c4c;
    border: 1px solid #444;
    border-radius: 3px;
    color: #999;
    font-size: 15px;
}
.sumbtns .up {
    transform: rotate(-90deg);
    border: 0;
    background: none;
}
.sumbtns .down {
    transform: rotate(90deg);
    border: 0;
    background: none;
}
.sumview {
    flex: 1;
    margin: 0 1px 0 3px;
    border-left: 2px solid #d05020;
    background: repeating-linear-gradient(0deg, #2f2f2f 0, #2f2f2f 1.5px, #484848 1.5px, #484848 3.4px);
}
.sumview + .sumbtns {
    margin-right: 3px;
}

/* edit list */
.editlist-wrap {
    display: flex;
    margin-left: 1px;
    flex: 1;
    min-width: 0;
}
.listcol {
    width: 280px;
    flex: none;
    display: flex;
    flex-direction: column;
}
.listhead, .lrow {
    display: grid;
    grid-template-columns: 78px 30px 27px 23px 20px 21px 18px 19px 21px 22px;
    align-items: center;
}
.listhead {
    height: 20px;
    margin-top: 1px;
    font-size: 10.5px;
    color: #ddd;
    flex: none;
}
.listhead div {
    text-align: center;
    border-right: 1px solid #666;
    white-space: nowrap;
}
.listhead div:first-child {
    text-align: left;
    padding-left: 3px;
}
.listhead div:last-child {
    border: 0;
}
.listbody {
    flex: 1;
    background: #e4e4e4;
    border-left: 2px solid #333;
}
.lrow {
    height: 18px;
    margin-left: -2px;
}
.lrow > div {
    display: flex;
    align-items: center;
    justify-content: center;
    height: 18px;
}
.lrow .lname {
    justify-content: flex-start;
    padding-left: 6px;
    font-size: 10.5px;
    color: #444;
}
.lrow.hl {
    background: #8e8e8e;
}
.ck {
    width: 12px;
    height: 12px;
}
.ic {
    width: 11px;
    height: 11px;
}
.ic-in {
    width: 11px;
    height: 11px;
}
.ic.rs {
    color: #500f14;
}
.ic.ss {
    color: #2a4a10;
}
.in-dark {
    color: #555;
}
.in-white {
    color: #eee;
}
.ic-leaf {
    width: 12px;
    height: 10px;
}
.rdot {
    width: 10px;
    height: 10px;
    border-radius: 50%;
    background: #4a2a2e;
}
.rdot.armed {
    background: #f08888;
}
.sq-s, .sq-si {
    width: 11px;
    height: 10px;
    background: #284010;
}
.sq-si {
    background: #0f4030;
}
.vtabs {
    flex: 1;
    display: flex;
    flex-direction: column;
    gap: 8px;
    padding-top: 4px;
    background: #505050;
}
.vtab {
    writing-mode: vertical-rl;
    font-size: 10.5px;
    color: #ddd;
    background: #5c5c5c;
    border-radius: 0 4px 4px 0;
    padding: 1px 3px 1px 5px;
    width: 22px;
    margin-left: 1px;
    line-height: 14px;
    white-space: nowrap;
}
.v0 { height: 44px; }
.v1 { height: 91px; background: #686868; }
.v2 { height: 57px; }
.v3 { height: 108px; }
.v4 { height: 90px; }

/* second, darker copy of the list */
.crop {
    width: 306px;
    height: 952px;
    flex: none;
    margin: 152px 0 0 28px;
    background: #555;
    padding-left: 6px;
}
.crop .listcol {
    width: 278px;
}
.crop .listhead {
    margin-top: 2px;
}
.crop .listbody {
    background: #c4c4c4;
    margin-bottom: 3px;
    border-left: 0;
}
.crop .lrow {
    margin-left: 0;
}
.crop .lname {
    padding-left: 4px;
}

.statusbar {
    height: 36px;
    flex: none;
    background: #555;
    border-top: 1px solid #3c3c3c;
    position: relative;
}
.grip {
    position: absolute;
    right: 4px;
    bottom: 6px;
    border: 5px solid transparent;
    border-top: 7px solid #aaa;
    border-bottom: 0;
}

/* annotations */
.marks {
    position: absolute;
    left: -3px;
    top: -4px;
    pointer-events: none;
}
.note {
    position: absolute;
    font-family: "Lato", sans-serif;
    font-weight: 400;
    white-space: nowrap;
}
.note-red {
    left: 597px;
    top: 235px;
    font-size: 34px;
    letter-spacing: 0;
    word-spacing: 2px;
    color: #f00;
}
.note-now {
    left: 1921px;
    top: 101px;
    font-size: 30px;
    letter-spacing: 1.2px;
    word-spacing: 4px;
    color: #00f;
}
.note-commit {
    left: 1573px;
    top: 705px;
    font-size: 30px;
    line-height: 50px;
    letter-spacing: 1.3px;
    word-spacing: 4px;
    color: #00f;
}
.note-item {
    top: 994px;
    font-size: 32px;
    letter-spacing: 1.1px;
    word-spacing: 4px;
    color: #000;
}
.note-item.one {
    left: 1585px;
}
.note-item.two {
    left: 1929px;
}
```
